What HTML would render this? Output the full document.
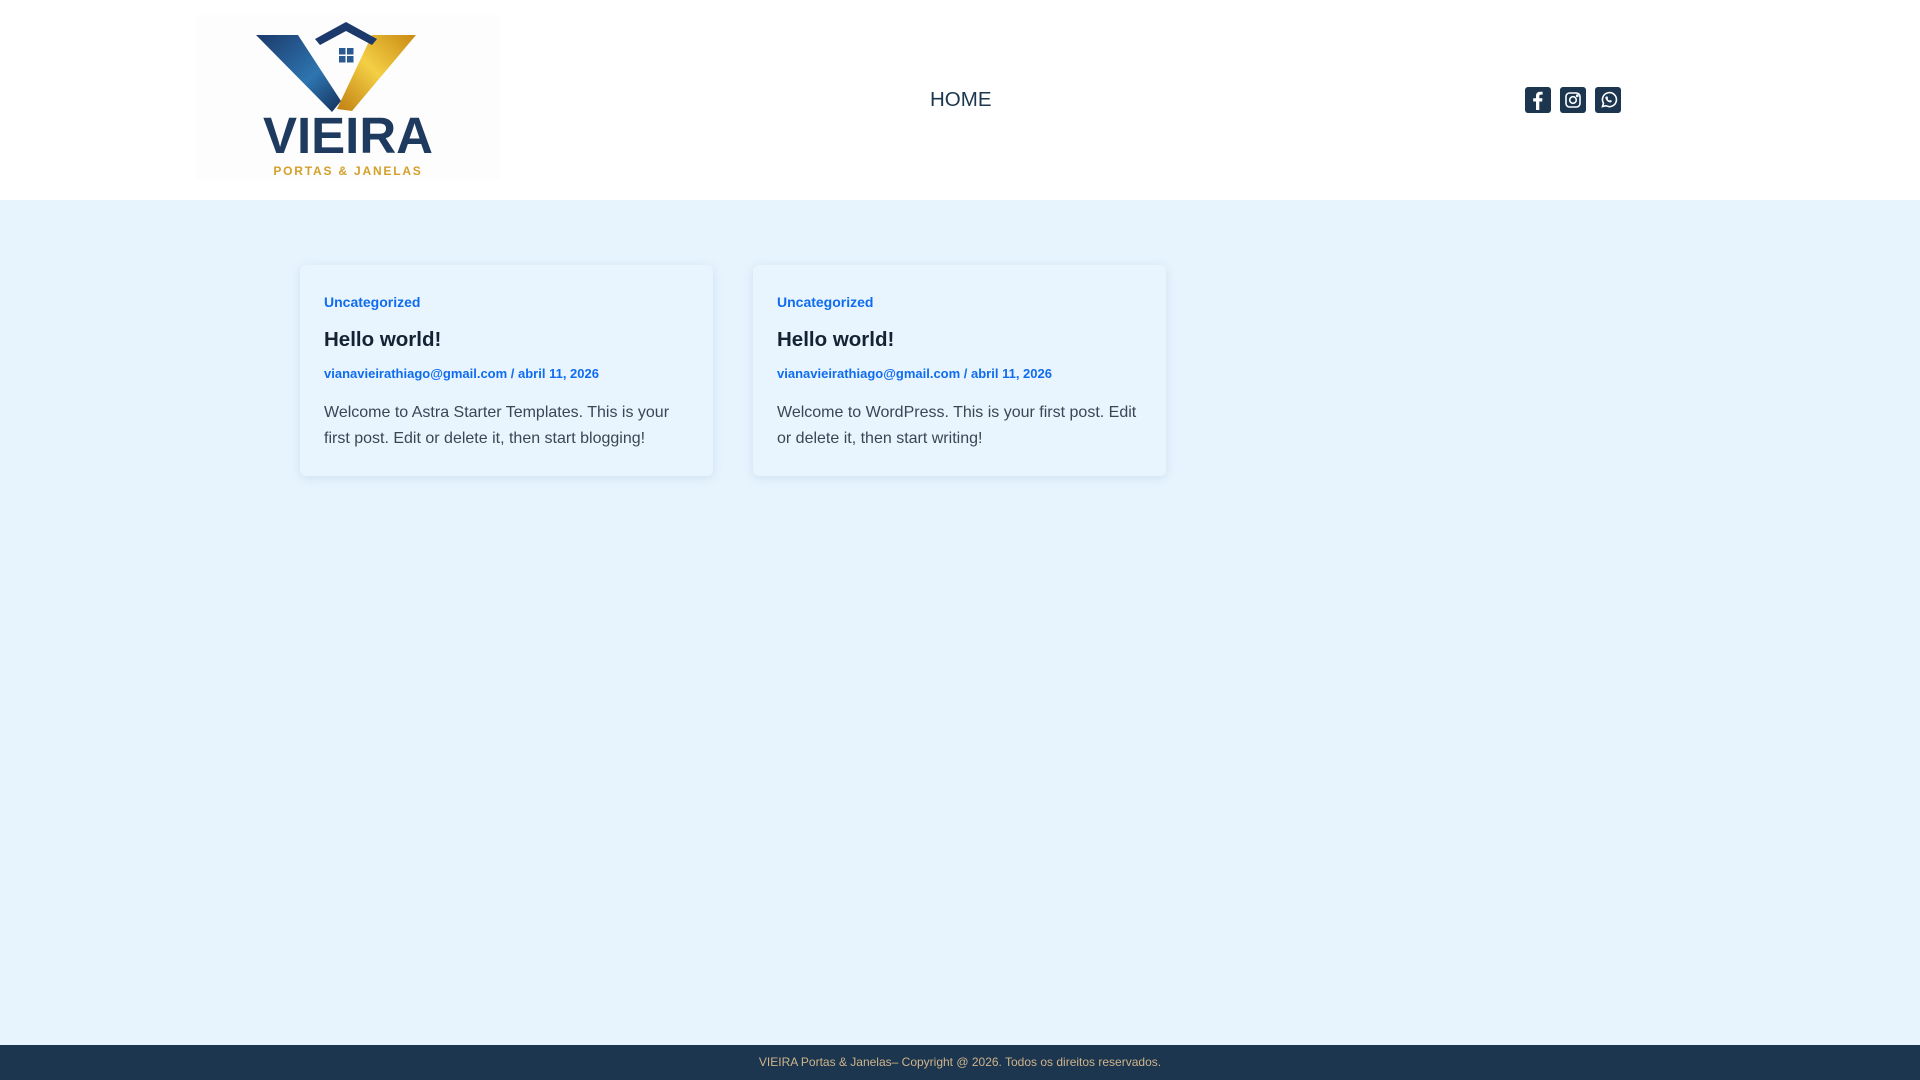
<!DOCTYPE html>
<html><head><meta charset="utf-8"><style>
*{margin:0;padding:0;box-sizing:border-box}
body{width:1920px;height:1080px;background:#e7f4fe;font-family:"Liberation Sans",sans-serif;position:relative;overflow:hidden}
header{position:absolute;left:0;top:0;width:1920px;height:200px;background:#fff}
.logo{position:absolute;left:196px;top:15px;width:304px;height:166px;background:#fdfdfd}
.home{position:absolute;left:930px;top:88px;font-size:20.5px;color:#1b364e}
.ic{position:absolute;top:87px;width:26px;height:26px;background:#1b364e;border-radius:3px}
.card{position:absolute;top:265px;width:413px;height:211px;background:#e8f5fe;border-radius:6px;box-shadow:0 2px 10px rgba(100,140,180,.18);padding:0 24px}
.cat{position:absolute;left:24px;top:29px;font-size:14px;font-weight:bold;color:#0f6cf0}
.t{position:absolute;left:24px;top:63px;font-size:20.5px;font-weight:bold;color:#152232}
.m{position:absolute;left:24px;top:101px;font-size:13px;font-weight:bold;color:#0f6cf0;white-space:nowrap}
.e{position:absolute;left:24px;top:135px;width:370px;font-size:16px;line-height:26px;color:#3b4654}
footer{position:absolute;left:0;top:1045px;width:1920px;height:35px;background:#1b364e;color:#d0b48c;font-size:12px;text-align:center;line-height:34px}
</style></head><body>
<header>
<div class="logo"><svg width="304" height="166" viewBox="0 0 304 166">
<defs><linearGradient id="b" x1="0" y1="0" x2="1" y2="1"><stop offset="0" stop-color="#1b3a6b"/><stop offset=".6" stop-color="#2e75b0"/><stop offset="1" stop-color="#15305a"/></linearGradient>
<linearGradient id="g" x1="1" y1="0" x2="0" y2="1"><stop offset="0" stop-color="#c98a12"/><stop offset=".5" stop-color="#f4cf45"/><stop offset="1" stop-color="#c07f10"/></linearGradient></defs>
<polygon points="60,20 102,20 145,86 136,97" fill="url(#b)"/>
<polygon points="176,20 220,20 156,96 141,94" fill="url(#g)"/>
<polygon points="119,24 150,7 181,24 176,30 150,16 124,30" fill="#1b3a6b"/>
<rect x="143" y="33" width="6.5" height="6.5" fill="#2a5a92"/><rect x="151" y="33" width="6.5" height="6.5" fill="#2a5a92"/>
<rect x="143" y="41" width="6.5" height="6.5" fill="#2a5a92"/><rect x="151" y="41" width="6.5" height="6.5" fill="#2a5a92"/>
<text x="152" y="138" text-anchor="middle" font-family="Liberation Sans" font-weight="bold" font-size="51" fill="#1f3a5f">VIEIRA</text>
<text x="152" y="160" text-anchor="middle" font-family="Liberation Sans" font-weight="bold" font-size="12" letter-spacing="1.8" fill="#d4a02a">PORTAS &amp; JANELAS</text>
</svg></div>
<div class="home">HOME</div>
<div class="ic" style="left:1525px"><svg width="26" height="26" viewBox="0 0 26 26"><path d="M14.3 23V14.5h2.8l.4-3.2h-3.2V9.2c0-.9.3-1.6 1.6-1.6h1.7V4.8c-.3 0-1.3-.1-2.5-.1-2.5 0-4.1 1.5-4.1 4.2v2.4H8.2v3.2H11V23z" fill="#fff"/></svg></div>
<div class="ic" style="left:1560px"><svg width="26" height="26" viewBox="0 0 26 26" fill="none" stroke="#fff" stroke-width="1.6"><rect x="6" y="6" width="14" height="14" rx="3.5"/><circle cx="13" cy="13" r="3.3"/><circle cx="17.3" cy="8.7" r=".6" fill="#fff"/></svg></div>
<div class="ic" style="left:1595px"><svg width="26" height="26" viewBox="0 0 26 26" fill="none" stroke="#fff" stroke-width="1.6"><path d="M7.5 19.5l1-3.2A7 7 0 1 1 11 18.7z"/><path d="M10.6 10.2c0 2.6 2.5 5 5 5l1-1.1-1.600-.8-.7.7c-.9-.4-1.7-1.2-2.1-2.1l.7-.7-.8-1.6z" fill="#fff" stroke-width=".6"/></svg></div>
</header>
<div class="card" style="left:300px">
<div class="cat">Uncategorized</div><div class="t">Hello world!</div>
<div class="m">vianavieirathiago@gmail.com / abril 11, 2026</div>
<div class="e">Welcome to Astra Starter Templates. This is your first post. Edit or delete it, then start blogging!</div></div>
<div class="card" style="left:753px">
<div class="cat">Uncategorized</div><div class="t">Hello world!</div>
<div class="m">vianavieirathiago@gmail.com / abril 11, 2026</div>
<div class="e">Welcome to WordPress. This is your first post. Edit or delete it, then start writing!</div></div>
<footer>VIEIRA Portas &amp; Janelas– Copyright @ 2026. Todos os direitos reservados.</footer>
</body></html>
